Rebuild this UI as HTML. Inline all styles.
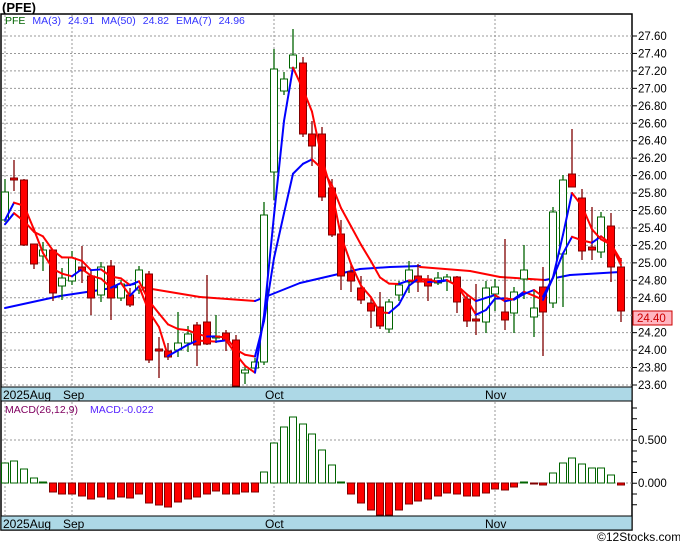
<!DOCTYPE html>
<html><head><meta charset="utf-8"><style>
html,body{margin:0;padding:0;background:#fff;width:680px;height:546px;overflow:hidden}
svg{display:block;font-family:"Liberation Sans",sans-serif}
</style></head><body>
<svg id="s" width="680" height="546" xmlns="http://www.w3.org/2000/svg">
<text x="2" y="12" font-size="13" font-weight="bold">(PFE)</text>
<rect x="1" y="14" width="631" height="516" fill="#fff" stroke="#000" stroke-width="1.5"/>
<g id="grid"></g>
<rect x="1" y="387" width="631" height="14" fill="#add8e6" stroke="#000" stroke-width="1"/>
<rect x="1" y="516" width="631" height="14" fill="#add8e6" stroke="#000" stroke-width="1"/>
<g font-size="12" fill="#000">
<text x="3" y="399">2025Aug</text><text x="63" y="399">Sep</text><text x="265" y="399">Oct</text><text x="485" y="399">Nov</text>
<text x="3" y="528">2025Aug</text><text x="63" y="528">Sep</text><text x="265" y="528">Oct</text><text x="485" y="528">Nov</text>
</g>
<g id="plot"></g>
<text x="5" y="24" font-size="10.5"><tspan fill="#006400">PFE</tspan><tspan fill="#3333ff" dx="7">MA(3)</tspan><tspan fill="#3333ff" dx="7">24.91</tspan><tspan fill="#3333ff" dx="7">MA(50)</tspan><tspan fill="#3333ff" dx="7">24.82</tspan><tspan fill="#3333ff" dx="7">EMA(7)</tspan><tspan fill="#3333ff" dx="7">24.96</tspan></text>
<text x="5" y="413" font-size="10.5"><tspan fill="#800060">MACD(26,12,9)</tspan><tspan fill="#5522ff" dx="12">MACD:-0.022</tspan></text>
<g id="axis" font-size="11.5"></g>
<rect x="633" y="311" width="39" height="14" fill="#ffb6c1" stroke="#cc0000" stroke-width="1"/>
<text x="637" y="322" font-size="11.5" fill="#cc0000">24.40</text>
<text x="597" y="541" font-size="12">©12Stocks.com</text>
</svg>
<script>
var NS="http://www.w3.org/2000/svg";
function el(p,t,a){var e=document.createElementNS(NS,t);for(var k in a)e.setAttribute(k,a[k]);p.appendChild(e);return e;}
var grid=document.getElementById('grid'),plot=document.getElementById('plot'),axis=document.getElementById('axis');
var labels=["27.60","27.40","27.20","27.00","26.80","26.60","26.40","26.20","26.00","25.80","25.60","25.40","25.20","25.00","24.80","24.60","24.40","24.20","24.00","23.80","23.60"];
for(var i=0;i<labels.length;i++){var y=36+i*17.45;
 el(grid,'line',{x1:2,x2:632,y1:y,y2:y,stroke:'#999','stroke-dasharray':'2,2','stroke-width':1});
 el(axis,'line',{x1:632,x2:637,y1:y,y2:y,stroke:'#000'});
 if(labels[i]!="24.40"||true){var t=el(axis,'text',{x:638,y:y+4});t.textContent=labels[i];}}
[5,72,274,495].forEach(function(x){el(grid,'line',{x1:x,x2:x,y1:15,y2:386,stroke:'#999','stroke-dasharray':'2,2'});el(grid,'line',{x1:x,x2:x,y1:402,y2:515,stroke:'#999','stroke-dasharray':'2,2'});});
[440,483].forEach(function(y){el(grid,'line',{x1:2,x2:632,y1:y,y2:y,stroke:'#999','stroke-dasharray':'2,2'});});
for(var y=408;y<=515;y+=10.75){el(axis,'line',{x1:632,x2:637,y1:y,y2:y,stroke:'#000'});}
var t1=el(axis,'text',{x:638,y:444});t1.textContent="0.500";
var t2=el(axis,'text',{x:638,y:487});t2.textContent="0.000";
var C=[[5,179,222,192,220,1],[14,160,191,178,180,0],[24,179,246,180,245,0],[34,244,269,244,264,0],[43,242,271,250,256,1],[53,250,301,250,293,0],[62,268,300,278,286,1],[72,251,285,258,281,1],[82,246,283,267,271,0],[91,270,315,276,298,0],[101,262,302,267,295,1],[111,260,320,266,298,0],[121,280,301,284,298,1],[130,288,307,295,305,0],[139,266,294,270,290,1],[149,271,363,274,360,0],[159,337,378,349,351,0],[168,343,360,351,357,0],[178,312,357,343,350,1],[188,326,352,334,343,1],[197,322,366,325,345,0],[207,275,345,322,344,0],[216,315,343,336,338,1],[226,330,351,333,341,0],[236,335,386,340,386,0],[245,365,384,370,373,1],[255,358,372,362,368,1],[264,202,365,215,362,1],[274,49,200,69,172,1],[284,72,95,79,91,1],[293,29,70,55,68,1],[303,57,137,63,134,0],[312,121,166,134,146,0],[322,127,201,134,197,0],[332,179,237,188,235,0],[341,220,290,234,276,0],[351,265,292,272,281,0],[361,276,304,288,300,0],[371,297,328,303,311,0],[380,292,329,307,326,0],[389,299,333,302,329,1],[399,281,301,285,295,1],[409,261,293,270,282,1],[418,264,292,276,282,0],[428,275,301,279,286,0],[438,272,285,278,283,1],[447,274,291,277,281,1],[457,276,313,277,302,0],[467,295,327,299,321,0],[476,284,335,319,321,0],[486,281,333,288,322,1],[495,279,311,287,294,1],[505,239,330,312,320,0],[514,287,333,292,313,1],[524,245,299,270,279,1],[534,291,337,308,317,1],[543,267,356,287,312,0],[553,207,308,212,303,1],[563,175,307,180,254,1],[572,129,187,174,187,0],[582,189,260,198,251,0],[592,207,260,247,250,0],[601,212,258,217,252,1],[611,213,282,226,267,0],[621,258,322,267,311,0]];
var M=[-20,-22,-14,-5,-1,9,11,11,13,16,14,16,14,15,11,20,22,24,19,16,14,11,8,11,11,9,9,-11,-40,-56,-66,-59,-49,-33,-18,-1,11,20,27,32,32,27,21,18,16,13,10,11,13,13,10,6,7,4,-1,1,2,-10,-20,-25,-19,-15,-15,-8,2];
// MACD bars
for(var i=0;i<C.length&&i<M.length;i++){var x=C[i][0],v=M[i];var y0=Math.min(483,483+v),h=Math.max(1,Math.abs(v));if(y0+h>515)h=515-y0;
 if(v<0)el(plot,'rect',{x:x-3.5,y:y0,width:7,height:h,fill:'#fff',stroke:'#006400','stroke-width':1});
 else el(plot,'rect',{x:x-3.5,y:y0,width:7,height:h,fill:'#ff0000',stroke:'#800000','stroke-width':1});}
// MA50 long line
function dirLine(pts){for(var i=1;i<pts.length;i++){var a=pts[i-1],b=pts[i];el(plot,'line',{x1:a[0],y1:a[1],x2:b[0],y2:b[1],stroke:(b[1]<=a[1]?'#0000ff':'#ff0000'),'stroke-width':2,'stroke-linecap':'round'});}}
dirLine([[5,308],[60,296],[100,290],[140,283]]);
dirLine([[140,287],[200,297],[255,301]]);
dirLine([[255,301],[300,283],[330,276],[360,269],[390,267],[420,266]]);
dirLine([[420,267],[470,271],[500,277],[545,280]]);
dirLine([[545,280],[570,275],[620,272]]);
// candles
for(var i=0;i<C.length;i++){var c=C[i],col=c[5]?'#006400':'#800000';
 el(plot,'line',{x1:c[0],x2:c[0],y1:c[1],y2:c[2],stroke:col,'stroke-width':1.3});
 el(plot,'rect',{x:c[0]-3.5,y:c[3],width:7,height:Math.max(1,c[4]-c[3]),fill:c[5]?'#fff':'#ff0000',stroke:col,'stroke-width':1});}
// MA3 and EMA7
var cl=C.map(function(c){return c[5]?c[3]:c[4];});
var m3=[],e7=[],e=235;
for(var i=0;i<cl.length;i++){var a=i>=1?cl[i-1]:232,b=i>=2?cl[i-2]:236;m3.push([C[i][0],(cl[i]+a+b)/3]);e=e+0.25*(cl[i]-e);e7.push([C[i][0],e]);}
dirLine(e7);dirLine(m3);
</script>
</body></html>
